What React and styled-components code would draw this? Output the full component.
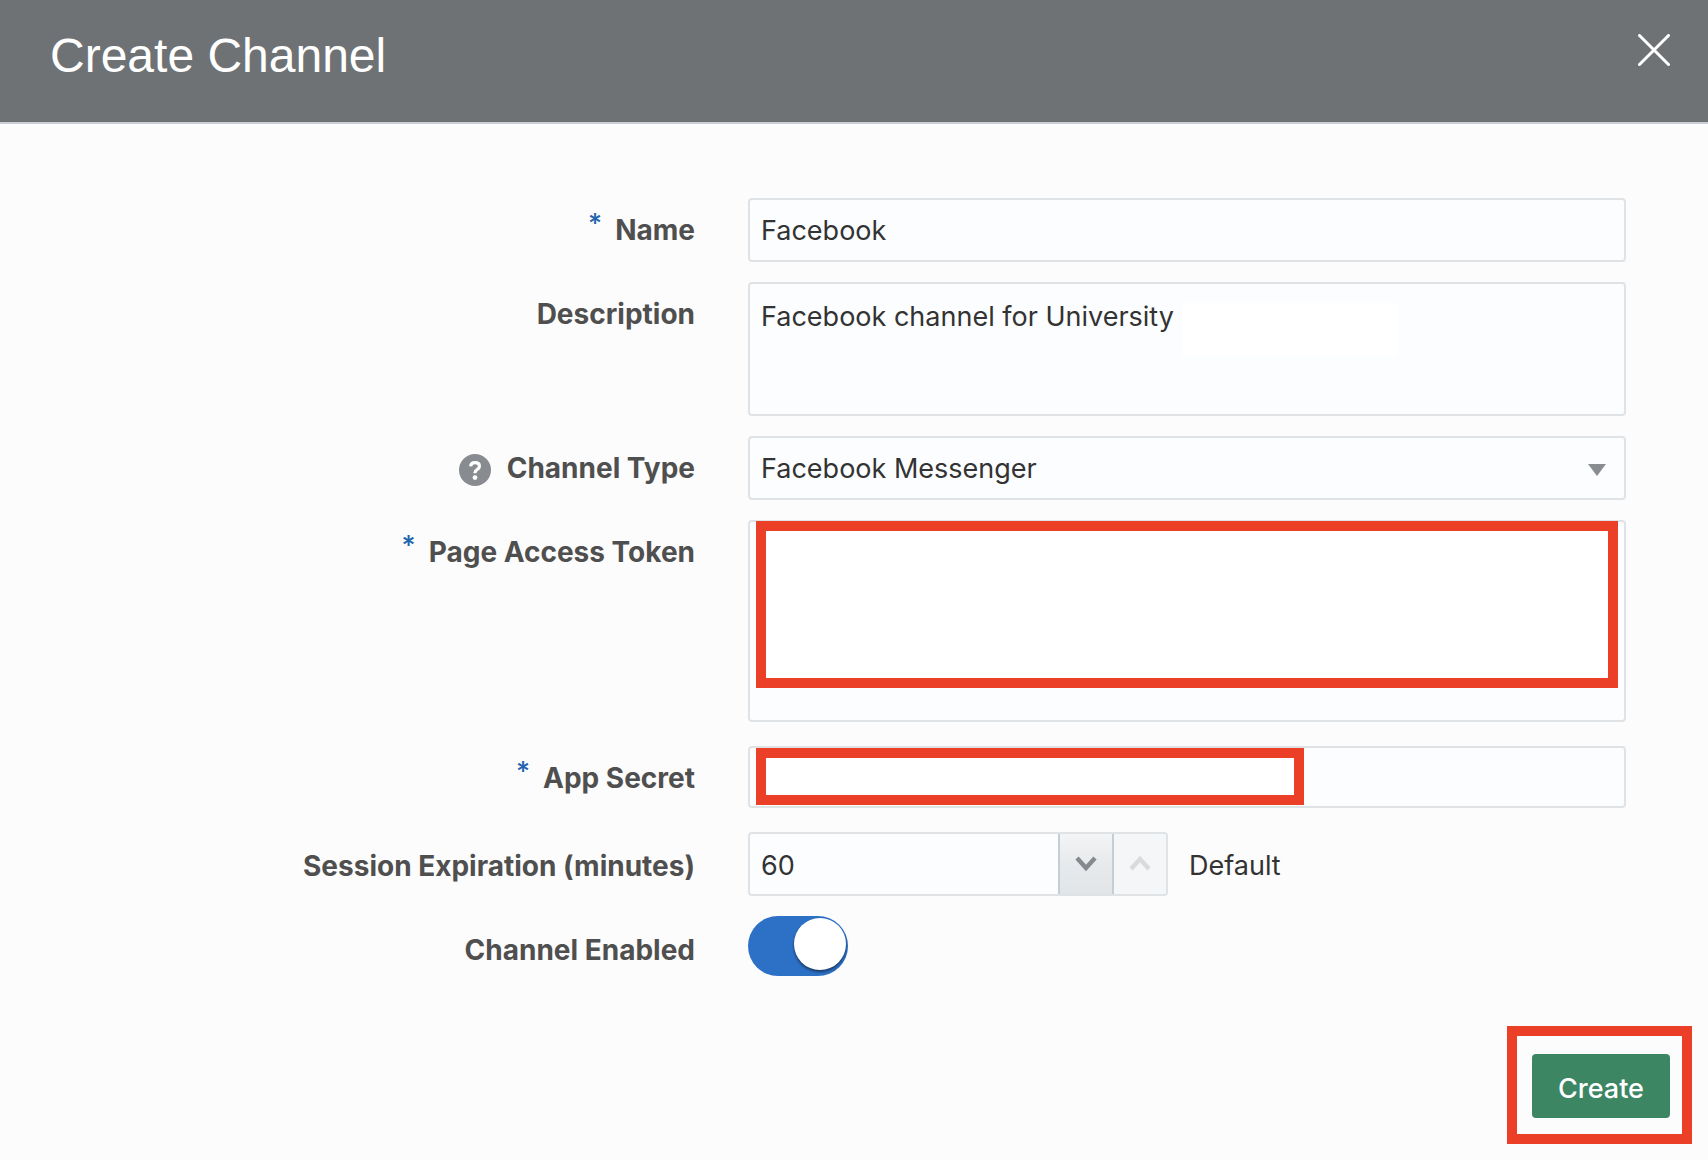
import React, { useState } from "react";
import styled, { createGlobalStyle } from "styled-components";

const GlobalStyle = createGlobalStyle`
  *, *::before, *::after { box-sizing: border-box; }
  body {
    margin: 0;
    background: #fcfcfc;
    color: #333;
    font-family: Inter, "Liberation Sans", sans-serif;
    font-size: 27px;
    line-height: 36px;
  }
`;

const Header = styled.header`
  display: flex;
  justify-content: space-between;
  align-items: flex-start;
  padding: 28px 38px 38px 50px;
  background: #6e7275;
  border-bottom: 2px solid #c8cfd7;
`;

const Title = styled.h1`
  margin: 0;
  color: #fff;
  font: 400 48px/56px "Liberation Sans", Arial, sans-serif;
`;

const CloseButton = styled.button`
  display: flex;
  margin: 6px 0 0;
  padding: 0;
  border: 0;
  background: none;
  color: #fff;
  cursor: pointer;
`;

const Form = styled.form`
  padding: 74px 0 16px;
`;

const Fields = styled.div`
  display: flex;
  flex-direction: column;
  gap: 20px;
  padding-right: 82px;
`;

const Row = styled.div`
  display: grid;
  grid-template-columns: minmax(0, 695fr) minmax(0, 878fr);
  column-gap: 53px;
  align-items: start;
  padding: ${(p) => (p.$spaced ? "4px 0" : "0")};
`;

const LabelCell = styled.div`
  display: flex;
  justify-content: flex-end;
  align-items: flex-start;
  padding-top: ${(p) => (p.$low ? "16px" : "14px")};
`;

const Label = styled.label`
  color: #4f4f4f;
  font-size: 28px;
  font-weight: 700;
`;

const Star = styled.span`
  margin-right: 13px;
  color: #2364ae;
  font-size: 27px;
  font-weight: 500;
  line-height: 24px;
`;

const HelpButton = styled.button`
  display: flex;
  margin: 4px 16px 0 0;
  padding: 0;
  border: 0;
  background: none;
  cursor: help;
`;

const controlStyle = `
  display: block;
  width: 100%;
  margin: 0;
  border: 2px solid #dfe3e6;
  border-radius: 4px;
  background: #fcfdff;
  color: #333;
  font: inherit;
  outline: none;
`;

const Input = styled.input`
  ${controlStyle}
  height: ${(p) => (p.$short ? "62px" : "64px")};
  padding: 0 11px;
`;

const TextArea = styled.textarea`
  ${controlStyle}
  height: ${(p) => (p.$tall ? "202px" : "134px")};
  padding: 15px 11px;
  resize: none;
`;

const Select = styled.select`
  ${controlStyle}
  height: 64px;
  padding: 1px 48px 0 11px;
  appearance: none;
`;

const Control = styled.div`
  position: relative;
`;

const Caret = styled.svg`
  position: absolute;
  top: 28px;
  right: 20px;
  pointer-events: none;
`;

const DescriptionMask = styled.div`
  position: absolute;
  top: 21px;
  left: 434px;
  width: 216px;
  height: 53px;
  background: #fff;
`;

const TokenMask = styled.div`
  position: absolute;
  inset: 1px 8px 34px;
  border: 10px solid #eb4027;
  background: #fff;
`;

const SecretMask = styled.div`
  position: absolute;
  top: 2px;
  bottom: 3px;
  left: 8px;
  width: 548px;
  border: 10px solid #eb4027;
  background: #fff;
`;

const SpinnerLine = styled.div`
  display: flex;
  align-items: center;
  gap: 21px;
`;

const Spinner = styled.div`
  display: flex;
  width: 420px;
  height: 64px;
  overflow: hidden;
  border: 2px solid #dfe3e6;
  border-radius: 4px;
  background: #fcfdff;
`;

const SpinnerInput = styled.input`
  flex: 1;
  min-width: 0;
  margin: 0;
  padding: 4px 11px 0;
  border: 0;
  background: none;
  color: #333;
  font: inherit;
  outline: none;
`;

const StepButton = styled.button`
  display: flex;
  justify-content: center;
  align-items: center;
  width: ${(p) => (p.$down ? "56px" : "52px")};
  margin: 0;
  padding: 0;
  border: solid #c5ced6;
  border-width: ${(p) => (p.$down ? "0 2px" : "0")};
  background: ${(p) => (p.$down ? "linear-gradient(#f3f4f5, #e7eaec 50%, #e1e5e8)" : "#f4f6f8")};
  color: ${(p) => (p.$down ? "#86898d" : "#d8dadc")};
`;

const Hint = styled.span`
  padding-top: 4px;
`;

const Switch = styled.input`
  appearance: none;
  display: block;
  width: 100px;
  height: 60px;
  margin: 0;
  padding: 2px;
  border-radius: 30px;
  background: ${(p) => (p.checked ? "#2d71c7" : "#b5babf")};
  cursor: pointer;

  &::before {
    content: "";
    display: block;
    width: 52px;
    height: 52px;
    margin-left: ${(p) => (p.checked ? "44px" : "0")};
    border-radius: 50%;
    background: #fff;
    box-shadow: 0 2px 3px rgba(0, 0, 0, 0.5);
  }
`;

const Footer = styled.footer`
  display: flex;
  justify-content: flex-end;
  padding: 50px 16px 0;
`;

const Highlight = styled.div`
  padding: 18px 12px 16px 15px;
  border: 10px solid #eb4027;
`;

const CreateButton = styled.button`
  display: block;
  min-width: 138px;
  height: 64px;
  margin: 0;
  padding: 5px 24px 0;
  border: 0;
  border-radius: 4px;
  background: #3c8664;
  color: #fff;
  font: inherit;
  font-weight: 500;
  cursor: pointer;
`;

function FieldRow({ id, label, required, help, spaced, low, children }) {
  return (
    <Row $spaced={spaced}>
      <LabelCell $low={low}>
        {required && <Star aria-hidden="true">*</Star>}
        {help && (
          <HelpButton type="button" aria-label={`Help for ${label}`}>
            <svg width="32" height="32" viewBox="0 0 32 32" fill="none">
              <circle cx="16" cy="16" r="16" fill="#888b8f" />
              <path
                d="M11.6 12.4c.2-2.4 1.9-3.7 4.4-3.7 2.6 0 4.4 1.4 4.4 3.5 0 1.6-.8 2.5-2.3 3.5-1.5.9-2.1 1.6-2.1 3v.6"
                stroke="#fff"
                strokeWidth="3.2"
              />
              <circle cx="16" cy="23.6" r="2.4" fill="#fff" />
            </svg>
          </HelpButton>
        )}
        <Label htmlFor={id}>{label}</Label>
      </LabelCell>
      {children}
    </Row>
  );
}

export default function App() {
  const [minutes, setMinutes] = useState(60);
  const [enabled, setEnabled] = useState(true);

  return (
    <>
      <GlobalStyle />
      <Header>
        <Title>Create Channel</Title>
        <CloseButton type="button" aria-label="Close">
          <svg width="32" height="32" viewBox="0 0 32 32" stroke="currentColor" strokeWidth="3" strokeLinecap="round">
            <path d="M1.5 1.5l29 29M30.5 1.5l-29 29" />
          </svg>
        </CloseButton>
      </Header>
      <Form onSubmit={(e) => e.preventDefault()}>
        <Fields>
          <FieldRow id="name" label="Name" required>
            <Input id="name" defaultValue="Facebook" required />
          </FieldRow>
          <FieldRow id="description" label="Description">
            <Control>
              <TextArea id="description" defaultValue="Facebook channel for University" />
              <DescriptionMask />
            </Control>
          </FieldRow>
          <FieldRow id="type" label="Channel Type" help>
            <Control>
              <Select id="type" defaultValue="messenger">
                <option value="messenger">Facebook Messenger</option>
              </Select>
              <Caret width="18" height="12" viewBox="0 0 18 12" fill="#898c91">
                <path d="M0 0h18L9 12z" />
              </Caret>
            </Control>
          </FieldRow>
          <FieldRow id="token" label="Page Access Token" required>
            <Control>
              <TextArea id="token" $tall required />
              <TokenMask />
            </Control>
          </FieldRow>
          <FieldRow id="secret" label="App Secret" required spaced>
            <Control>
              <Input id="secret" $short required />
              <SecretMask />
            </Control>
          </FieldRow>
          <FieldRow id="expiration" label="Session Expiration (minutes)" low>
            <SpinnerLine>
              <Spinner>
                <SpinnerInput
                  id="expiration"
                  inputMode="numeric"
                  value={minutes}
                  onChange={(e) => setMinutes(Number(e.target.value) || 0)}
                />
                <StepButton type="button" $down aria-label="Decrease" onClick={() => setMinutes(Math.max(0, minutes - 1))}>
                  <svg width="22" height="16" viewBox="0 0 22 16" fill="none" stroke="currentColor" strokeWidth="4.4">
                    <path d="M2 2l9 10 9-10" />
                  </svg>
                </StepButton>
                <StepButton type="button" aria-label="Increase" disabled>
                  <svg width="22" height="16" viewBox="0 0 22 16" fill="none" stroke="currentColor" strokeWidth="4.4">
                    <path d="M2 13l9-10 9 10" />
                  </svg>
                </StepButton>
              </Spinner>
              <Hint>Default</Hint>
            </SpinnerLine>
          </FieldRow>
          <FieldRow id="enabled" label="Channel Enabled" low>
            <Switch
              id="enabled"
              type="checkbox"
              role="switch"
              checked={enabled}
              onChange={(e) => setEnabled(e.target.checked)}
            />
          </FieldRow>
        </Fields>
        <Footer>
          <Highlight>
            <CreateButton type="submit">Create</CreateButton>
          </Highlight>
        </Footer>
      </Form>
    </>
  );
}
